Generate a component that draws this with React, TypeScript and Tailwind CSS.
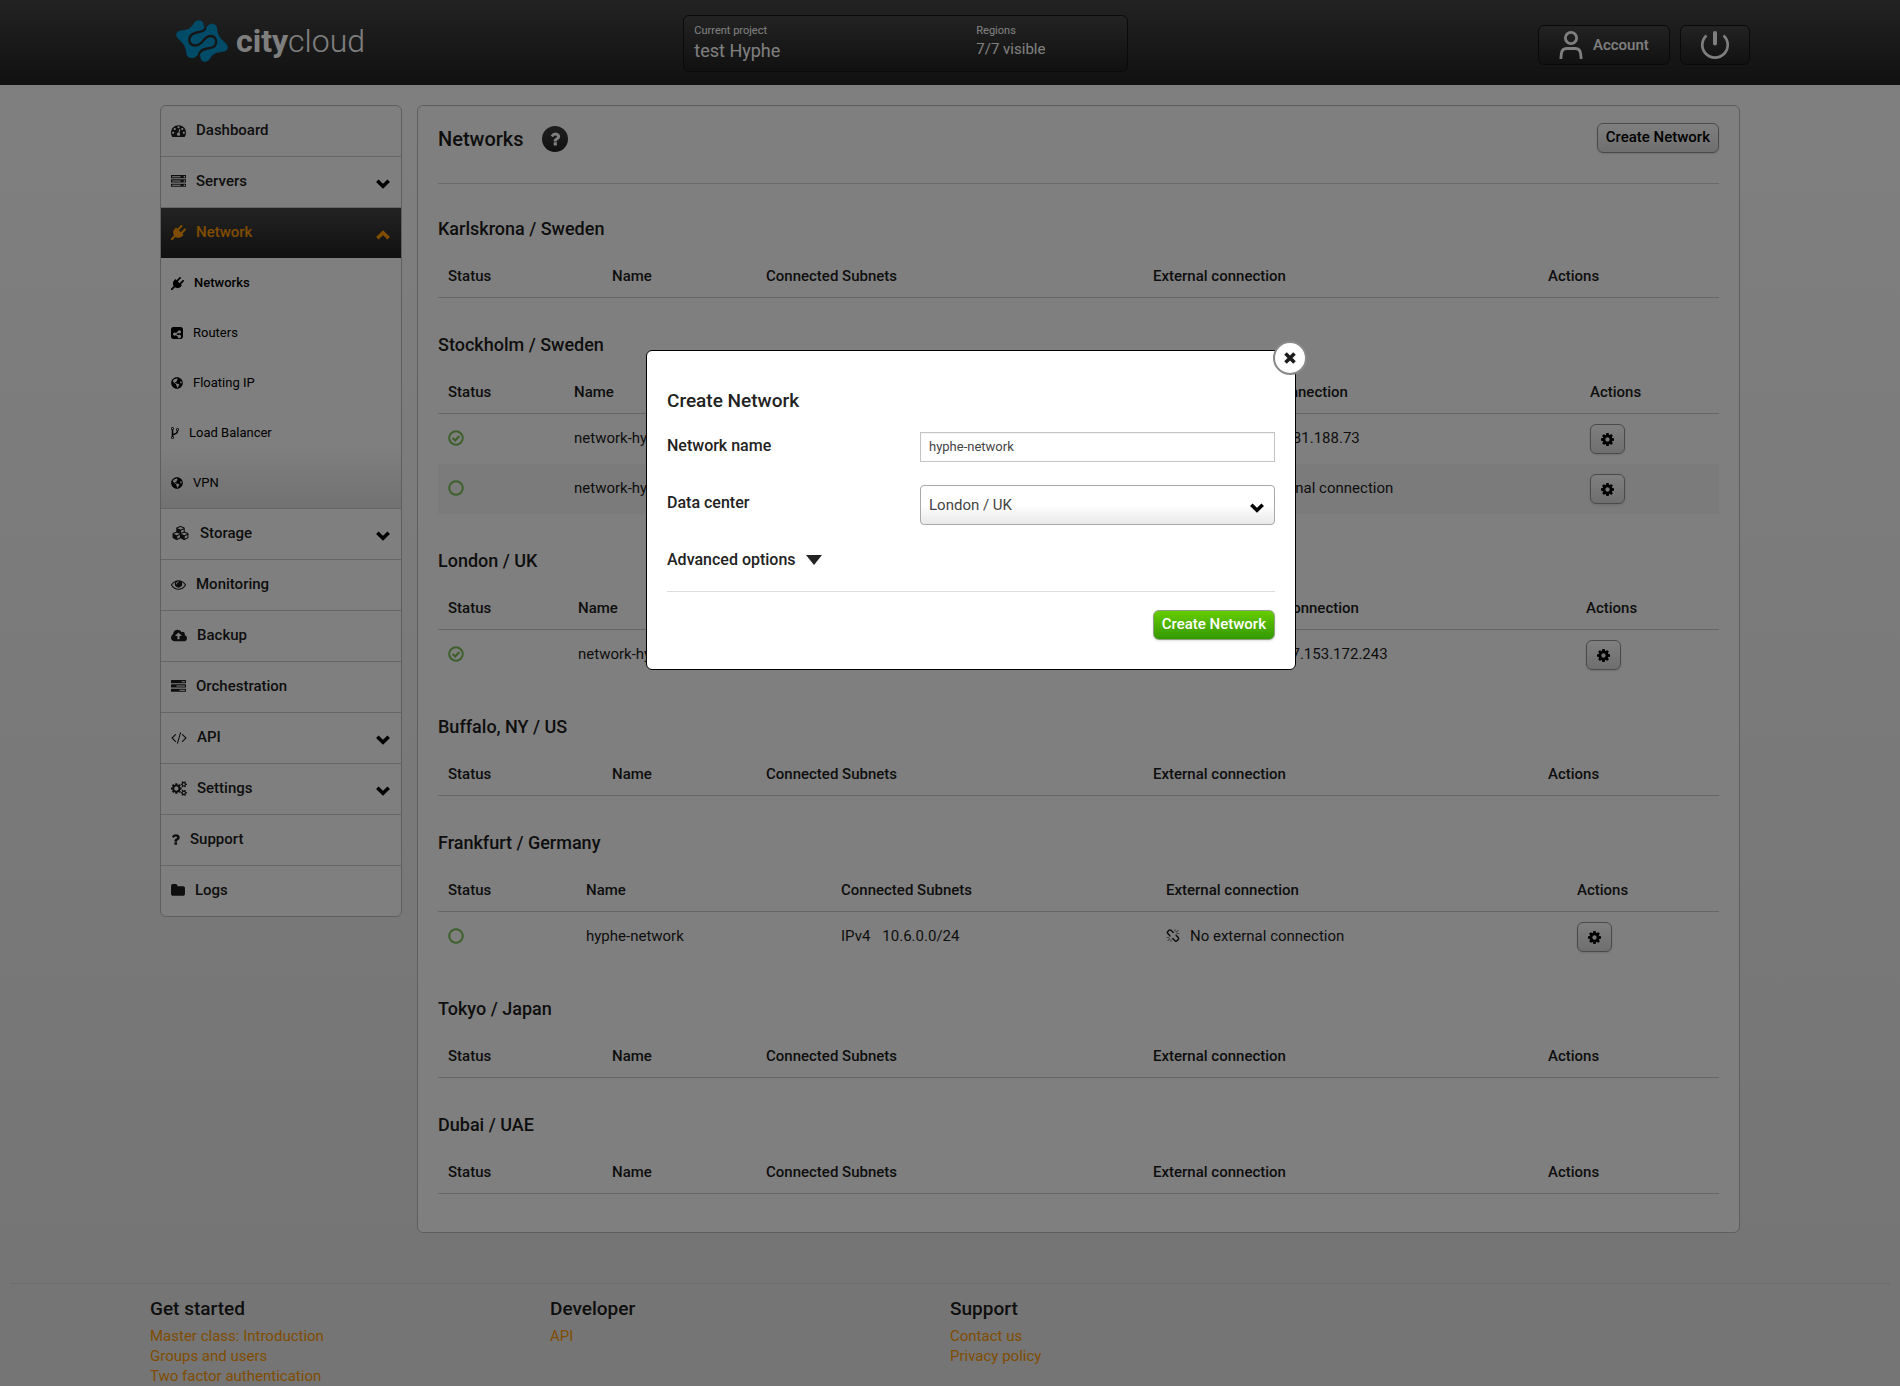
import React, { useState } from "react";
import { FaCubes, FaGlobeAmericas } from "react-icons/fa";

/* ---------- icons ---------- */

type GlyphProps = { box: string; d: string; className: string };

function Glyph({ box, d, className }: GlyphProps) {
  return (
    <svg viewBox={box} className={className} fill="currentColor" aria-hidden="true">
      <path d={d} />
    </svg>
  );
}

const DASHBOARD =
  "M384 1152q0-53-37.5-90.5t-90.5-37.5-90.5 37.5-37.5 90.5 37.5 90.5 90.5 37.5 90.5-37.5 37.5-90.5zm192-448q0-53-37.5-90.5t-90.5-37.5-90.5 37.5-37.5 90.5 37.5 90.5 90.5 37.5 90.5-37.5 37.5-90.5zm428 481l101-382q6-26-7.5-48.5t-38.5-29.5-48 6.5-30 39.5l-101 382q-60 5-107 43.5t-63 98.5q-20 77 20 146t117 89 146-20 89-117q16-60-6-117t-72-91zm660-33q0-53-37.5-90.5t-90.5-37.5-90.5 37.5-37.5 90.5 37.5 90.5 90.5 37.5 90.5-37.5 37.5-90.5zm-640-640q0-53-37.5-90.5t-90.5-37.5-90.5 37.5-37.5 90.5 37.5 90.5 90.5 37.5 90.5-37.5 37.5-90.5zm448 192q0-53-37.5-90.5t-90.5-37.5-90.5 37.5-37.5 90.5 37.5 90.5 90.5 37.5 90.5-37.5 37.5-90.5zm320 448q0 261-141 483-19 29-54 29h-1402q-35 0-54-29-141-221-141-483 0-182 71-348t191-286 286-191 348-71 348 71 286 191 191 286 71 348z";
const SERVER =
  "M128 1408h1024v-128h-1024v128zm0-512h1024v-128h-1024v128zm1568 448q0-40-28-68t-68-28-68 28-28 68 28 68 68 28 68-28 28-68zm-1568-960h1024v-128h-1024v128zm1568 448q0-40-28-68t-68-28-68 28-28 68 28 68 68 28 68-28 28-68zm0-512q0-40-28-68t-68-28-68 28-28 68 28 68 68 28 68-28 28-68zm96 832v384h-1792v-384h1792zm0-512v384h-1792v-384h1792zm0-512v384h-1792v-384h1792z";
const PLUG =
  "M1755 453q37 38 37 90.5t-37 90.5l-401 400 150 150-160 160q-163 163-389.5 186.5t-411.5-100.5l-362 362h-181v-181l362-362q-124-185-100.5-411.5t186.5-389.5l160-160 150 150 400-401q38-37 91-37t90 37 37 90.5-37 90.5l-400 401 234 234 401-400q38-37 91-37t90 37z";
const SHARE =
  "M1408 1341q0-88-62.5-151t-150.5-63q-84 0-145 58l-241-120q2-16 2-23t-2-23l241-120q61 58 145 58 88 0 150.5-63t62.5-151-62.5-150.5-150.5-62.5-151 62.5-63 150.5q0 7 2 23l-241 120q-62-57-145-57-88 0-150.5 62.5t-62.5 150.5 62.5 150.5 150.5 62.5q83 0 145-57l241 120q-2 16-2 23 0 88 63 150.5t151 62.5 150.5-62.5 62.5-150.5zm256-925v960q0 119-84.5 203.5t-203.5 84.5h-960q-119 0-203.5-84.5t-84.5-203.5v-960q0-119 84.5-203.5t203.5-84.5h960q119 0 203.5 84.5t84.5 203.5z";
const FORK =
  "M672 1472q0-40-28-68t-68-28-68 28-28 68 28 68 68 28 68-28 28-68zm0-1152q0-40-28-68t-68-28-68 28-28 68 28 68 68 28 68-28 28-68zm640 128q0-40-28-68t-68-28-68 28-28 68 28 68 68 28 68-28 28-68zm96 0q0 52-26 96.5t-70 69.5q-2 287-226 414-67 38-203 81-128 40-169.5 71t-41.5 100v26q44 25 70 69.5t26 96.5q0 80-56 136t-136 56-136-56-56-136q0-52 26-96.5t70-69.5v-820q-44-25-70-69.5t-26-96.5q0-80 56-136t136-56 136 56 56 136q0 52-26 96.5t-70 69.5v497q54-26 154-57 55-17 87.5-29.5t70.5-31 59-39.5 40.5-51 28-69.5 8.5-91.5q-44-25-70-69.5t-26-96.5q0-80 56-136t136-56 136 56 56 136z";
const EYE =
  "M1664 960q-152-236-381-353 61 104 61 225 0 185-131.5 316.5t-316.5 131.5-316.5-131.5-131.5-316.5q0-121 61-225-229 117-381 353 133 205 333.5 326.5t434.5 121.5 434.5-121.5 333.5-326.5zm-720-384q0-20-14-34t-34-14q-125 0-214.5 89.5t-89.5 214.5q0 20 14 34t34 14 34-14 14-34q0-86 61-147t147-61q20 0 34-14t14-34zm848 384q0 34-20 69-140 230-376.5 368.5t-499.5 138.5-499.5-139-376.5-368q-20-35-20-69t20-69q140-229 376.5-368t499.5-139 499.5 139 376.5 368q20 35 20 69z";
const CLOUD_UP =
  "M1280 928q0-14-9-23l-352-352q-9-9-23-9t-23 9l-351 351q-10 12-10 24 0 14 9 23t23 9h224v352q0 13 9.5 22.5t22.5 9.5h192q13 0 22.5-9.5t9.5-22.5v-352h224q13 0 22.5-9.5t9.5-22.5zm640 288q0 159-112.5 271.5t-271.5 112.5h-1088q-185 0-316.5-131.5t-131.5-316.5q0-130 70-240t188-165q-2-30-2-43 0-212 150-362t362-150q156 0 285.5 87t188.5 231q71-62 166-62 106 0 181 75t75 181q0 76-41 138 130 31 213.5 135.5t83.5 238.5z";
const TASKS =
  "M1024 1408h640v-128h-640v128zm-384-512h1024v-128h-1024v128zm640-512h384v-128h-384v128zm512 832v256q0 26-19 45t-45 19h-1664q-26 0-45-19t-19-45v-256q0-26 19-45t45-19h1664q26 0 45 19t19 45zm0-512v256q0 26-19 45t-45 19h-1664q-26 0-45-19t-19-45v-256q0-26 19-45t45-19h1664q26 0 45 19t19 45zm0-512v256q0 26-19 45t-45 19h-1664q-26 0-45-19t-19-45v-256q0-26 19-45t45-19h1664q26 0 45 19t19 45z";
const CODE =
  "M681 1399l-50 50q-10 10-23 10t-23-10l-466-466q-10-10-10-23t10-23l466-466q10-10 23-10t23 10l50 50q10 10 10 23t-10 23l-393 393 393 393q10 10 10 23t-10 23zm591-1067l-373 1291q-4 13-15.5 19.5t-23.5 2.5l-62-17q-13-4-19.5-15.5t-2.5-24.5l373-1291q4-13 15.5-19.5t23.5-2.5l62 17q13 4 19.5 15.5t2.5 24.5zm657 651l-466 466q-10 10-23 10t-23-10l-50-50q-10-10-10-23t10-23l393-393-393-393q-10-10-10-23t10-23l50-50q10-10 23-10t23 10l466 466q10 10 10 23t-10 23z";
const COGS =
  "M896 896q0-106-75-181t-181-75-181 75-75 181 75 181 181 75 181-75 75-181zm768 512q0-52-38-90t-90-38-90 38-38 90q0 53 37.5 90.5t90.5 37.5 90.5-37.5 37.5-90.5zm0-1024q0-52-38-90t-90-38-90 38-38 90q0 53 37.5 90.5t90.5 37.5 90.5-37.5 37.5-90.5zm-384 421v185q0 10-7 19.5t-16 10.5l-155 24q-11 35-32 76 34 48 90 115 7 11 7 20 0 12-7 19-23 30-82.5 89.5t-78.5 59.5q-11 0-21-7l-115-90q-37 19-77 31-11 108-23 155-7 24-30 24h-186q-11 0-20-7.5t-10-17.5l-23-153q-34-10-75-31l-118 89q-7 7-20 7-11 0-21-8-144-133-144-160 0-9 7-19 10-14 41-53t47-61q-23-44-35-82l-152-24q-10-1-17-9.5t-7-19.5v-185q0-10 7-19.5t16-10.5l155-24q11-35 32-76-34-48-90-115-7-11-7-20 0-12 7-20 22-30 82-89t79-59q11 0 21 7l115 90q34-18 77-32 11-108 23-154 7-24 30-24h186q11 0 20 7.5t10 17.5l23 153q34 10 75 31l118-89q8-7 20-7 11 0 21 8 144 133 144 160 0 8-7 19-12 16-42 54t-45 60q23 48 34 82l152 23q10 2 17 10.5t7 19.5zm640 533v140q0 16-149 31-12 27-30 52 51 113 51 138 0 4-4 7-122 71-124 71-8 0-46-47t-52-68q-20 2-30 2t-30-2q-14 21-52 68t-46 47q-2 0-124-71-4-3-4-7 0-25 51-138-18-25-30-52-149-15-149-31v-140q0-16 149-31 13-29 30-52-51-113-51-138 0-4 4-7 4-2 35-20t59-34 30-16q8 0 46 46.5t52 67.5q20-2 30-2t30 2q51-71 92-112l6-2q4 0 124 70 4 3 4 7 0 25-51 138 17 23 30 52 149 15 149 31zm0-1024v140q0 16-149 31-12 27-30 52 51 113 51 138 0 4-4 7-122 71-124 71-8 0-46-47t-52-68q-20 2-30 2t-30-2q-14 21-52 68t-46 47q-2 0-124-71-4-3-4-7 0-25 51-138-18-25-30-52-149-15-149-31v-140q0-16 149-31 13-29 30-52-51-113-51-138 0-4 4-7 4-2 35-20t59-34 30-16q8 0 46 46.5t52 67.5q20-2 30-2t30 2q51-71 92-112l6-2q4 0 124 70 4 3 4 7 0 25-51 138 17 23 30 52 149 15 149 31z";
const QUESTION =
  "M1088 1256v240q0 16-12 28t-28 12h-240q-16 0-28-12t-12-28v-240q0-16 12-28t28-12h240q16 0 28 12t12 28zm316-600q0 54-15.5 101t-35 76.5-55 59.5-57.5 43.5-61 35.5q-41 23-68.5 65t-27.5 67q0 17-12 32.5t-28 15.5h-240q-15 0-25.5-18.5t-10.5-37.5v-45q0-83 65-156.5t143-108.5q59-27 84-56t25-76q0-42-46.5-74t-107.5-32q-65 0-108 29-35 25-107 115-13 16-31 16-12 0-25-8l-164-125q-13-10-15.5-25t5.5-28q160-266 464-266 80 0 161 31t146 83 106 127.5 41 158.5z";
const FOLDER =
  "M1728 608v704q0 92-66 158t-158 66h-1216q-92 0-158-66t-66-158v-960q0-92 66-158t158-66h320q92 0 158 66t66 158v32h672q92 0 158 66t66 158z";
const COG =
  "M1152 896q0-106-75-181t-181-75-181 75-75 181 75 181 181 75 181-75 75-181zm512-109v222q0 12-8 23t-20 13l-185 28q-19 54-39 91 35 50 107 138 10 12 10 25t-9 23q-27 37-99 108t-94 71q-12 0-26-9l-138-108q-44 23-91 38-16 136-29 186-7 28-36 28h-222q-14 0-24.5-8.5t-11.5-21.5l-28-184q-49-16-90-37l-141 107q-10 9-25 9-14 0-25-11-126-114-165-168-7-10-7-23 0-12 8-23 15-21 51-66.5t54-70.5q-27-50-41-99l-183-27q-13-2-21-12.5t-8-23.5v-222q0-12 8-23t19-13l186-28q14-46 39-92-40-57-107-138-10-12-10-24 0-10 9-23 26-36 98.5-107.5t94.5-71.5q13 0 26 10l138 107q44-23 91-38 16-136 29-186 7-28 36-28h222q14 0 24.5 8.5t11.5 21.5l28 184q49 16 90 37l142-107q9-9 24-9 13 0 25 10 129 119 165 170 7 8 7 22 0 12-8 23-15 21-51 66.5t-54 70.5q26 50 41 98l183 28q13 2 21 12.5t8 23.5z";
const UNLINK =
  "M503 1271l-256 256q-10 9-23 9-12 0-23-9-9-10-9-23t9-23l256-256q10-9 23-9t23 9q9 10 9 23t-9 23zm169 41v320q0 14-9 23t-23 9-23-9-9-23v-320q0-14 9-23t23-9 23 9 9 23zm-224-224q0 14-9 23t-23 9h-320q-14 0-23-9t-9-23 9-23 23-9h320q14 0 23 9t9 23zm1264 128q0 120-85 203l-147 146q-83 83-203 83-121 0-204-85l-334-335q-21-21-42-56l239-18 273 274q28 28 68 28t68-28l147-146q28-28 28-67 0-40-28-68l-274-275 18-239q35 21 56 42l336 336q84 86 84 204zm-617-724l-239 18-273-274q-28-28-68-28-39 0-68 27l-147 146q-28 28-28 67 0 40 28 68l274 274-18 240q-35-21-56-42l-336-336q-84-86-84-204 0-120 85-203l147-146q83-83 203-83 121 0 204 85l334 335q21 21 42 56zm633 84q0 14-9 23t-23 9h-320q-14 0-23-9t-9-23 9-23 23-9h320q14 0 23 9t9 23zm-544-544v320q0 14-9 23t-23 9-23-9-9-23v-320q0-14 9-23t23-9 23 9 9 23zm407 151l-256 256q-11 9-23 9t-23-9q-9-10-9-23t9-23l256-256q10-9 23-9t23 9q9 10 9 23t-9 23z";

const SQUARE = "0 0 1792 1792";

function Chevron({ up, className }: { up?: boolean; className: string }) {
  return (
    <svg viewBox="0 0 14 10" className={className} fill="none" stroke="currentColor" strokeWidth="3.6" aria-hidden="true">
      <path d={up ? "M1.3 8.3 L7 2.8 L12.7 8.3" : "M1.3 1.7 L7 7.2 L12.7 1.7"} />
    </svg>
  );
}

function StatusIcon({ connected }: { connected: boolean }) {
  return (
    <svg
      viewBox="0 0 16 16"
      className="size-4 text-[#7ac058]"
      fill="none"
      stroke="currentColor"
      role="img"
      aria-label={connected ? "Active" : "Idle"}
    >
      <circle cx="8" cy="8" r="6.8" strokeWidth="2" />
      {connected && <path d="M4.6 8 L7.2 10.4 L11.4 6" strokeWidth="2.2" />}
    </svg>
  );
}

function LogoMark() {
  return (
    <svg viewBox="0 0 52 42" className="h-[42px] w-[52px]" aria-hidden="true">
      <path
        fill="#0098d0"
        d="M5 10.500 C11.500 10 14.500 8.500 18 3 C20.500 -1.200 27.500 -0.500 27.800 5 C28 8.500 29.500 8.500 32 5.500 C35.500 2.200 41 4 41.200 9 C41.500 15 44.500 18.500 49.500 23 C53.500 27 52 31 47 31.800 C40.500 32.500 37 33.500 34.500 38 C31.500 43.500 24.500 42.500 24.500 37.500 C24.300 34 22.500 34 20 36.500 C16.500 39.800 10.500 38 10.300 33 C10 27 7.500 23.500 2.500 19 C-1.500 15 0 11.200 5 10.500 Z"
      />
      <path
        fill="none"
        stroke="#2c2c2c"
        strokeWidth="2.400"
        strokeLinecap="round"
        d="M29.500 8.500 C28 11 26.500 11.500 23 12 C16.500 13 12.800 16 13.300 20.500 C14 26 21 27 25 23 C28.500 19.500 30 16 34.500 16 C39 16 41 20 39.800 24 C38.500 28 35 27.800 31 28.500 C27 29.200 24.500 31 23 34"
      />
    </svg>
  );
}

/* ---------- header ---------- */

function Header() {
  return (
    <header className="bg-linear-to-b from-[#464646] to-[#222222]">
      <div className="mx-auto flex h-[85px] w-full max-w-[1600px] items-start text-white">
        <div className="w-1/3">
          <a href="#home" className="flex items-center gap-2 pt-5 pl-[26px]" aria-label="citycloud">
            <LogoMark />
            <span className="text-[32px] leading-[42px]">
              <span className="font-bold">city</span>
              <span className="font-light">cloud</span>
            </span>
          </a>
        </div>
        <div className="mt-[15px] flex h-[57px] w-[445px] rounded-md border border-[#151515] bg-linear-to-b from-[#464646] to-[#222222] pt-[7px] pl-2.5">
          <div className="w-[282px]">
            <p className="text-[11px] leading-4">Current project</p>
            <p className="text-[18px] leading-6">test Hyphe</p>
          </div>
          <div>
            <p className="text-[11px] leading-4">Regions</p>
            <p className="text-[15px] leading-5">7/7 visible</p>
          </div>
        </div>
        <div className="mt-[25px] ml-auto flex gap-2.5">
          <button className="flex h-10 w-[132px] items-center gap-2.5 rounded-md border border-[#151515] bg-linear-to-b from-[#464646] to-[#222222] pl-5 text-[15px] font-medium">
            <svg viewBox="0 0 24 28" className="h-7 w-6" fill="none" stroke="currentColor" strokeWidth="2.800" aria-hidden="true">
              <circle cx="12" cy="7" r="5.600" />
              <path d="M1.800 28 L2.400 22.500 C2.900 19 4.500 17.500 7.500 17.500 H16.500 C19.500 17.500 21.100 19 21.600 22.500 L22.200 28" />
            </svg>
            Account
          </button>
          <button
            className="flex h-10 w-[70px] items-center justify-center rounded-md border border-[#151515] bg-linear-to-b from-[#464646] to-[#222222]"
            aria-label="Log out"
          >
            <svg viewBox="0 0 28 28" className="size-7" fill="none" stroke="currentColor" aria-hidden="true">
              <path d="M5.500 4.500 A12.700 12.700 0 1 0 22.500 4.500" strokeWidth="2.600" />
              <path d="M14 2 V12.500" strokeWidth="4" strokeLinecap="round" />
            </svg>
          </button>
        </div>
      </div>
    </header>
  );
}

/* ---------- sidebar ---------- */

type Item = { label: string; icon: React.ReactNode; expandable?: boolean };

const TOP_ITEMS: Item[] = [
  { label: "Dashboard", icon: <Glyph box={SQUARE} d={DASHBOARD} className="size-[15px]" /> },
  { label: "Servers", icon: <Glyph box={SQUARE} d={SERVER} className="size-[15px]" />, expandable: true },
];

const SUB_ITEMS: Item[] = [
  { label: "Networks", icon: <Glyph box={SQUARE} d={PLUG} className="size-[13px]" /> },
  { label: "Routers", icon: <Glyph box="128 128 1536 1536" d={SHARE} className="size-3" /> },
  { label: "Floating IP", icon: <FaGlobeAmericas className="size-3" /> },
  { label: "Load Balancer", icon: <Glyph box="384 0 1024 1792" d={FORK} className="h-[14px] w-2" /> },
  { label: "VPN", icon: <FaGlobeAmericas className="size-3" /> },
];

const BOTTOM_ITEMS: Item[] = [
  { label: "Storage", icon: <FaCubes className="h-4 w-[19px]" />, expandable: true },
  { label: "Monitoring", icon: <Glyph box={SQUARE} d={EYE} className="size-[15px]" /> },
  { label: "Backup", icon: <Glyph box="0 0 1920 1792" d={CLOUD_UP} className="h-[15px] w-4" /> },
  { label: "Orchestration", icon: <Glyph box={SQUARE} d={TASKS} className="size-[15px]" /> },
  { label: "API", icon: <Glyph box="64 0 1920 1792" d={CODE} className="h-[15px] w-4" />, expandable: true },
  { label: "Settings", icon: <Glyph box="0 0 1920 1792" d={COGS} className="h-[15px] w-4" />, expandable: true },
  { label: "Support", icon: <Glyph box="384 0 1024 1792" d={QUESTION} className="h-[15px] w-[9px]" /> },
  { label: "Logs", icon: <Glyph box="64 0 1664 1792" d={FOLDER} className="h-[15px] w-[14px]" /> },
];

function MenuRow({ item }: { item: Item }) {
  return (
    <a href="#menu" className="flex h-[50px] items-center gap-2.5 pr-[11px] pb-0.5 pl-2.5 text-[15px] font-medium text-[#1c1c1c]">
      {item.icon}
      {item.label}
      {item.expandable && <Chevron className="mt-1.5 ml-auto h-2.5 w-[14px] text-black" />}
    </a>
  );
}

function Sidebar() {
  return (
    <nav className="w-[242px] shrink-0 overflow-hidden rounded-md border border-[#bcbcbc] bg-white">
      <ul className="divide-y divide-[#cccccc]">
        {TOP_ITEMS.map((item) => (
          <li key={item.label}>
            <MenuRow item={item} />
          </li>
        ))}
        <li>
          <a
            href="#network"
            className="flex h-[50px] items-center gap-2.5 bg-linear-to-b from-[#464646] to-[#222222] pr-[11px] pb-0.5 pl-2.5 text-[15px] font-medium text-[#ff9900]"
          >
            <Glyph box={SQUARE} d={PLUG} className="size-[15px]" />
            Network
            <Chevron up className="mt-1.5 ml-auto h-2.5 w-[14px]" />
          </a>
          <ul className="bg-linear-to-b from-white from-75% to-[#e4e4e4]">
            {SUB_ITEMS.map((item, index) => (
              <li key={item.label}>
                <a
                  href="#sub"
                  className={
                    index === 0
                      ? "flex h-[50px] items-center gap-2.5 px-2.5 text-[13px] font-medium text-black"
                      : "flex h-[50px] items-center gap-2.5 px-2.5 text-[13px] text-black"
                  }
                >
                  {item.icon}
                  {item.label}
                </a>
              </li>
            ))}
          </ul>
        </li>
        {BOTTOM_ITEMS.map((item) => (
          <li key={item.label}>
            <MenuRow item={item} />
          </li>
        ))}
      </ul>
    </nav>
  );
}

/* ---------- networks ---------- */

type Network = { connected: boolean; name: string; subnet: string; external: string | null };
type Region = { title: string; cols: number[]; rows: Network[] };

const EMPTY_COLS = [164, 154, 387, 395, 181];

const REGIONS: Region[] = [
  { title: "Karlskrona / Sweden", cols: EMPTY_COLS, rows: [] },
  {
    title: "Stockholm / Sweden",
    cols: [126, 300, 341, 375, 139],
    rows: [
      { connected: true, name: "network-hyphe", subnet: "10.2.0.0/24", external: "IPv4 31.81.188.73" },
      { connected: false, name: "network-hyphe-2", subnet: "10.3.0.0/24", external: null },
    ],
  },
  {
    title: "London / UK",
    cols: [130, 300, 348, 360, 143],
    rows: [{ connected: true, name: "network-hyphe", subnet: "10.4.0.0/24", external: "IPv4 37.153.172.243" }],
  },
  { title: "Buffalo, NY / US", cols: EMPTY_COLS, rows: [] },
  {
    title: "Frankfurt / Germany",
    cols: [138, 255, 325, 411, 152],
    rows: [{ connected: false, name: "hyphe-network", subnet: "10.6.0.0/24", external: null }],
  },
  { title: "Tokyo / Japan", cols: EMPTY_COLS, rows: [] },
  { title: "Dubai / UAE", cols: EMPTY_COLS, rows: [] },
];

const HEADINGS = ["Status", "Name", "Connected Subnets", "External connection", "Actions"];

function RegionTable({ region }: { region: Region }) {
  const total = region.cols.reduce((sum, width) => sum + width, 0);
  return (
    <section className="pt-8 first-of-type:pt-[30px]">
      <h2 className="mb-3 text-[18px] leading-[30px] font-medium">{region.title}</h2>
      <table className="w-full table-fixed border-separate border-spacing-0 text-left text-[15px]" aria-label={region.title}>
        <colgroup>
          {region.cols.map((width, index) => (
            <col key={index} style={{ width: `${(width / total) * 100}%` }} />
          ))}
        </colgroup>
        <thead>
          <tr>
            {HEADINGS.map((heading) => (
              <th key={heading} className="h-[42px] border-b border-[#cccccc] pl-2.5 font-medium">
                {heading}
              </th>
            ))}
          </tr>
        </thead>
        <tbody>
          {region.rows.map((row, index) => (
            <tr key={index} className="h-[50px] even:bg-[#f6f6f6]">
              <td className="pb-0.5 pl-2.5">
                <StatusIcon connected={row.connected} />
              </td>
              <td className="pb-0.5 pl-2.5 whitespace-nowrap">{row.name}</td>
              <td className="pb-0.5 pl-2.5">
                <span className="flex gap-3">
                  <span>IPv4</span>
                  <span>{row.subnet}</span>
                </span>
              </td>
              <td className="pb-0.5 pl-2.5">
                <span className="flex items-center gap-2.5 whitespace-nowrap">
                  <Glyph box={SQUARE} d={UNLINK} className="size-[14px]" />
                  {row.external ?? "No external connection"}
                </span>
              </td>
              <td className="pl-2.5">
                <button
                  className="flex h-[30px] w-[35px] items-center justify-center rounded-md border border-[#949494] bg-linear-to-b from-white to-[#dedede] text-black shadow-sm"
                  aria-label={`Actions for ${row.name}`}
                >
                  <Glyph box="128 128 1536 1536" d={COG} className="size-[13px]" />
                </button>
              </td>
            </tr>
          ))}
        </tbody>
      </table>
    </section>
  );
}

function NetworksPanel() {
  return (
    <main className="min-w-0 flex-1 rounded-md border border-[#bcbcbc] bg-white px-5 pb-[38px] text-[#1c1c1c]">
      <div className="flex h-[78px] items-start justify-between border-b border-[#d4d4d4] pt-[17px]">
        <div className="flex items-center gap-[18px] pt-[3px]">
          <h1 className="text-[20px] leading-[26px] font-medium">Networks</h1>
          <button
            className="flex size-[26px] items-center justify-center rounded-full bg-linear-to-b from-[#3c3c3c] to-[#222222] text-white"
            aria-label="Help"
          >
            <Glyph box="384 0 1024 1792" d={QUESTION} className="h-[18px] w-3" />
          </button>
        </div>
        <button className="h-[30px] rounded-md border border-[#949494] bg-linear-to-b from-white to-[#dedede] px-2 pb-0.5 text-[15px] font-medium text-black shadow-sm">
          Create Network
        </button>
      </div>
      {REGIONS.map((region) => (
        <RegionTable key={region.title} region={region} />
      ))}
    </main>
  );
}

/* ---------- footer ---------- */

const FOOTER = [
  { title: "Get started", links: ["Master class: Introduction", "Groups and users", "Two factor authentication"] },
  { title: "Developer", links: ["API"] },
  { title: "Support", links: ["Contact us", "Privacy policy"] },
];

function Footer() {
  return (
    <footer className="mx-2.5 mt-[50px] border-t border-[#d8d8d8] pt-3">
      <div className="mx-auto grid max-w-[1600px] grid-cols-4">
        {FOOTER.map((column) => (
          <div key={column.title}>
            <h3 className="mb-1 text-[19px] leading-[26px] font-medium text-[#1c1c1c]">{column.title}</h3>
            <ul className="text-[15px] leading-5 text-[#ff9900]">
              {column.links.map((link) => (
                <li key={link}>
                  <a href="#footer">{link}</a>
                </li>
              ))}
            </ul>
          </div>
        ))}
      </div>
    </footer>
  );
}

/* ---------- dialog ---------- */

function CreateNetworkDialog() {
  const [name, setName] = useState("hyphe-network");
  return (
    <div className="fixed inset-0 flex items-start justify-center bg-black/50 pt-[350px] pl-[42px]">
      <form
        role="dialog"
        aria-label="Create Network"
        className="relative w-full max-w-[650px] rounded-md border border-black bg-white px-5 pt-9 pb-[29px] text-[#222222]"
        onSubmit={(event) => event.preventDefault()}
      >
        <button
          type="button"
          aria-label="Close"
          className="absolute -top-2.5 -right-3 flex size-[34px] items-center justify-center rounded-full border-2 border-[#8a8a8a] bg-white text-[#1c1c1c]"
        >
          <svg viewBox="0 0 12 12" className="size-3" fill="none" stroke="currentColor" strokeWidth="3.600" aria-hidden="true">
            <path d="M1.500 1.500 L10.500 10.500 M10.500 1.500 L1.500 10.500" />
          </svg>
        </button>
        <h2 className="mb-[17px] text-[19px] leading-7 font-medium">Create Network</h2>
        <div className="grid grid-cols-[253px_1fr] gap-y-[23px] text-[16px]">
          <label htmlFor="network-name" className="leading-7 font-medium">
            Network name
          </label>
          <input
            id="network-name"
            value={name}
            onChange={(event) => setName(event.target.value)}
            className="h-[30px] border border-[#c4c4c4] px-2 pb-0.5 text-[13px] text-[#444444] inset-shadow-xs"
          />
          <label htmlFor="data-center" className="leading-9 font-medium">
            Data center
          </label>
          <div className="relative">
            <select
              id="data-center"
              defaultValue="London / UK"
              className="h-10 w-full appearance-none rounded-sm border border-[#a8a8a8] bg-linear-to-b from-white from-50% to-[#e9e9e9] px-2 text-[15px] text-[#444444]"
            >
              {REGIONS.map((region) => (
                <option key={region.title}>{region.title}</option>
              ))}
            </select>
            <Chevron className="pointer-events-none absolute top-[18px] right-[11px] h-2.5 w-[14px] text-black" />
          </div>
        </div>
        <button type="button" className="mt-5 flex h-[30px] items-center gap-2.5 text-[16px] font-medium">
          Advanced options
          <svg viewBox="0 0 16 10" className="h-2.5 w-4" fill="currentColor" aria-hidden="true">
            <path d="M0 0 H16 L8 10 Z" />
          </svg>
        </button>
        <div className="mt-4 flex justify-end border-t border-[#dddddd] pt-[18px]">
          <button
            type="submit"
            className="h-[30px] rounded-md border border-[#8fa080] bg-linear-to-b from-[#66cc00] to-[#339900] px-2 pb-0.5 text-[15px] font-medium text-white shadow-sm"
          >
            Create Network
          </button>
        </div>
      </form>
    </div>
  );
}

export default function App() {
  return (
    <div className="min-h-screen overflow-hidden bg-[#ebebeb] font-['Roboto',sans-serif]">
      <Header />
      <div className="bg-linear-to-b from-white to-[#ebebeb]">
        <div className="mx-auto flex max-w-[1600px] items-start gap-[15px] px-2.5 pt-5">
          <Sidebar />
          <NetworksPanel />
        </div>
      </div>
      <Footer />
      <CreateNetworkDialog />
    </div>
  );
}
